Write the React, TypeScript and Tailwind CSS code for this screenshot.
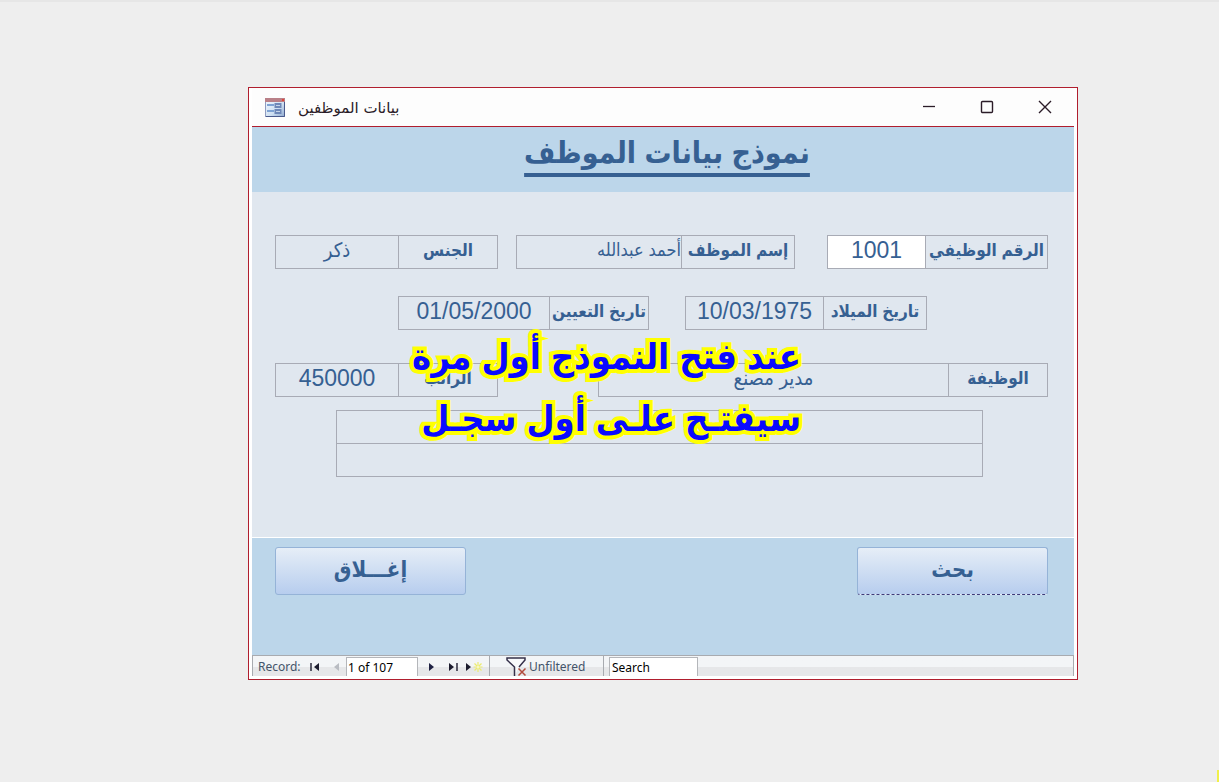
import type { ReactNode } from 'react';

interface FieldProps {
  id: string;
  label: string;
  value: string;
  className: string;
  labelClass?: string;
  inputClass?: string;
}

/**
 * Label and value joined in one bordered box, label on the right
 */
function Field({
  id,
  label,
  value,
  className,
  labelClass = 'w-[99px]',
  inputClass = 'text-center',
}: FieldProps) {
  return (
    <div className={`flex h-[34px] min-w-0 border border-[#a8abb5] ${className}`}>
      <label
        htmlFor={id}
        className={`flex shrink-0 items-center justify-center border-l border-[#a8abb5] pb-0.5 text-[17px] font-bold whitespace-nowrap ${labelClass}`}
      >
        {label}
      </label>
      <input
        id={id}
        defaultValue={value}
        className={`w-0 min-w-0 flex-1 pb-1 outline-none ${inputClass}`}
      />
    </div>
  );
}

function FormButton({ children, focused = false }: { children: ReactNode; focused?: boolean }) {
  return (
    <button
      type="button"
      className={`h-12 w-[191px] rounded-[3px] border border-[#95b3d7] bg-linear-to-b from-[#e6eef7] to-[#b7cdee] pb-1 text-[22px] font-bold ${
        focused ? 'border-b-[#3f3a78] [border-bottom-style:dashed]' : ''
      }`}
    >
      {children}
    </button>
  );
}

function FormIcon() {
  return (
    <svg width="20" height="19" viewBox="0 0 20 19" aria-hidden="true">
      <defs>
        <linearGradient id="sheet" x1="0" y1="0" x2="1" y2="1">
          <stop offset="0" stopColor="#f4f9fe" />
          <stop offset="0.6" stopColor="#cfe0f2" />
          <stop offset="1" stopColor="#8fa9cf" />
        </linearGradient>
      </defs>
      <rect x="0.5" y="0.5" width="19" height="18" fill="url(#sheet)" stroke="#8f9cc0" />
      <rect width="20" height="4" fill="#b98088" />
      <rect x="17" y="1" width="2" height="2" fill="#e0453a" />
      <path d="M19.5 4v14.5H1" fill="none" stroke="#4a5a8c" />
      <path d="M2 7h7M2 13h7" stroke="#7ea2d3" strokeWidth="2" />
      <rect x="10.5" y="6" width="5" height="3" fill="#c4d3e8" stroke="#6f88b8" strokeWidth="2" />
      <rect x="10.5" y="12" width="5" height="3" fill="#c4d3e8" stroke="#6f88b8" strokeWidth="2" />
    </svg>
  );
}

function TitleBar() {
  return (
    <div className="flex h-[39px] items-center border-b border-[#b01e2e] bg-[#fdfdfd] pr-[22px] pl-[13px] text-[#2b1c28]">
      <FormIcon />
      <h2 dir="rtl" className="ml-[13px] pt-0.5 font-['DejaVu_Sans',sans-serif] text-[15px]">
        بيانات الموظفين
      </h2>
      <div className="ml-auto flex items-center gap-11">
        <button type="button" aria-label="Minimize">
          <svg width="14" height="14" viewBox="0 0 14 14">
            <path d="M1 6.5h12" stroke="currentColor" strokeWidth="1.3" />
          </svg>
        </button>
        <button type="button" aria-label="Maximize">
          <svg width="14" height="14" viewBox="0 0 14 14">
            <rect x="1.5" y="1.5" width="11" height="11" rx="1" fill="none" stroke="currentColor" strokeWidth="1.4" />
          </svg>
        </button>
        <button type="button" aria-label="Close">
          <svg width="14" height="14" viewBox="0 0 14 14">
            <path d="M1 1l12 12M13 1L1 13" stroke="currentColor" strokeWidth="1.4" />
          </svg>
        </button>
      </div>
    </div>
  );
}

function RecordBar() {
  return (
    <div className="flex h-[21px] border border-b-0 border-[#a8abb0] bg-linear-to-b from-[#f3f5f7] from-55% to-[#e6e7e9] to-55% font-['Noto_Sans','Open_Sans',sans-serif] text-xs text-[#44546a]">
      <div className="flex w-[237px] items-center border-r border-[#a8abb0] pt-px pl-[5px]">
        <span className="w-[51px]">Record:</span>
        <button type="button" aria-label="First record">
          <svg width="12" height="10" viewBox="0 0 12 10">
            <path d="M2 1v8" stroke="#1c1c2e" strokeWidth="1.4" />
            <path d="M10 1v8L5 5z" fill="#1c1c2e" />
          </svg>
        </button>
        <button type="button" aria-label="Previous record" className="ml-3">
          <svg width="8" height="10" viewBox="0 0 8 10">
            <path d="M6 1v8L1 5z" fill="#b9bcc2" />
          </svg>
        </button>
        <input
          aria-label="Current record"
          defaultValue="1 of 107"
          className="ml-[5px] h-[19px] w-[72px] border border-b-0 border-[#b4b6ba] bg-white pl-px text-black outline-none"
        />
        <button type="button" aria-label="Next record" className="ml-[10px]">
          <svg width="8" height="10" viewBox="0 0 8 10">
            <path d="M1 1v8l5-4z" fill="#1f2244" />
          </svg>
        </button>
        <button type="button" aria-label="Last record" className="ml-3">
          <svg width="12" height="10" viewBox="0 0 12 10">
            <path d="M1 1v8l5-4z" fill="#1c1c2e" />
            <path d="M9 1v8" stroke="#1c1c2e" strokeWidth="1.4" />
          </svg>
        </button>
        <button type="button" aria-label="New record" className="ml-[5px]">
          <svg width="18" height="10" viewBox="0 0 18 10">
            <path d="M1 1v8l5-4z" fill="#1c1c2e" />
            <path d="M13 0v10M8.500 5h9M9.500 1.500l7 7M16.500 1.500l-7 7" stroke="#ecec6e" strokeWidth="1.2" />
            <circle cx="13" cy="5" r="1.500" fill="#f6f6c8" />
          </svg>
        </button>
      </div>
      <button
        type="button"
        className="flex w-[114px] items-center border-r border-[#a8abb0] pt-px pl-4"
      >
        <svg width="22" height="19" viewBox="0 0 22 19" className="mr-px shrink-0" aria-hidden="true">
          <path d="M8.500 19v-9L1 3V1h18v2l-6 7" fill="#f8f9fb" stroke="#35304a" strokeWidth="1.500" />
          <path d="M12.500 11.500l7 7M19.500 11.500l-7 7" stroke="#b24a3c" strokeWidth="1.500" />
        </svg>
        Unfiltered
      </button>
      <input
        aria-label="Search records"
        placeholder="Search"
        className="mt-px ml-[5px] h-[19px] w-[89px] border border-b-0 border-[#b4b6ba] bg-white pl-0.5 outline-none placeholder:text-black"
      />
    </div>
  );
}

export default function App() {
  return (
    <main className="min-h-screen border-t-2 border-[#e6e6e6] bg-[#eeeeee] pt-[85px] pr-[141px] pl-[248px] font-['Liberation_Sans','DejaVu_Sans_Condensed','DejaVu_Sans',sans-serif] text-[#366092]">
      <section className="relative border border-[#b01e2e] bg-white px-[3px] pb-[3px]">
        <TitleBar />

        <header dir="rtl" className="h-[65px] bg-[#bcd6ea] pl-2 text-center">
          <h1 className="text-3xl leading-[52px] font-bold underline decoration-4 underline-offset-[10px] [text-decoration-skip-ink:none]">
            نموذج بيانات الموظف
          </h1>
        </header>

        <form dir="rtl" className="bg-[#e0e7ef] pt-[43px] pr-[26px] pb-[60px] pl-[23px] text-[23px]">
          <div className="flex">
            <Field
              id="emp-no"
              label="الرقم الوظيفي"
              value="1001"
              className="flex-[219]"
              labelClass="w-[122px]"
              inputClass="bg-white text-center"
            />
            <Field
              id="emp-name"
              label="إسم الموظف"
              value="أحمد عبدالله"
              className="mr-8 flex-[277]"
              labelClass="w-[113px]"
              inputClass="text-right text-lg"
            />
            <Field
              id="gender"
              label="الجنس"
              value="ذكر"
              className="mr-[18px] flex-[221]"
              inputClass="text-center text-xl"
            />
          </div>

          <div className="mt-[27px] flex pr-[121px] pl-[123px]">
            <Field
              id="birth-date"
              label="تاريخ الميلاد"
              value="10/03/1975"
              className="flex-[240]"
              labelClass="w-[103px]"
            />
            <Field
              id="hire-date"
              label="تاريخ التعيين"
              value="01/05/2000"
              className="mr-9 flex-[249]"
            />
          </div>

          <div className="mt-[33px] flex">
            <Field
              id="job"
              label="الوظيفة"
              value="مدير مصنع"
              className="flex-[448]"
              inputClass="text-center text-xl"
            />
            <Field id="salary" label="الراتب" value="450000" className="mr-[100px] flex-[221]" />
          </div>

          {/* Notes: heading cell above, text cell below */}
          <div className="mt-[13px] mr-[65px] ml-[61px] border border-[#a8abb5] pt-8">
            <input
              aria-label="ملاحظات"
              className="block h-[33px] w-full border-t border-[#a8abb5] px-1 outline-none"
            />
          </div>
        </form>

        <footer
          dir="rtl"
          className="flex h-[118px] items-start justify-between border-t border-white bg-[#bcd6ea] pt-[9px] pr-[26px] pl-[23px]"
        >
          <FormButton focused>بحث</FormButton>
          <FormButton>إغـــلاق</FormButton>
        </footer>

        <RecordBar />

        {/* Caption lying over the form */}
        <p
          dir="rtl"
          className="pointer-events-none absolute top-[238px] right-[276px] text-4xl leading-[62px] font-bold whitespace-nowrap text-[#0a0aff] [-webkit-text-stroke:8px_#ffff00] [paint-order:stroke_fill]"
        >
          عند فتح النموذج أول مرة
          <br />
          سيفتـح علـى أول سجـل
        </p>
      </section>

      <div className="absolute right-0 bottom-0 h-3 w-0.5 bg-[#f0f04a]" />
    </main>
  );
}
